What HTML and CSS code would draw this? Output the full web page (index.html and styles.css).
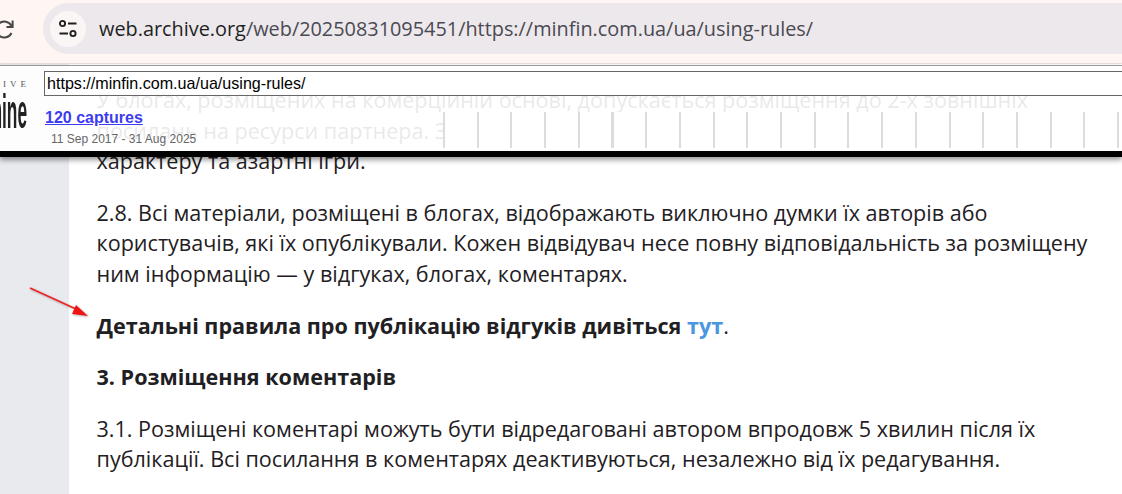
FILE: index.html
```html
<!DOCTYPE html>
<html lang="uk">
<head>
<meta charset="utf-8">
<title>Правила використання</title>
<link rel="stylesheet" href="styles.css">
</head>
<body>
<header class="chrome">
  <svg class="reload" width="14" height="24" viewBox="0 0 14 24" aria-hidden="true">
    <path d="M11.5 8A8 8 0 1 0 11.5 15" fill="none" stroke="#474747" stroke-width="2"/>
    <path d="M12.6 2.5V9H6.5" fill="none" stroke="#474747" stroke-width="2"/>
  </svg>
  <div class="omnibox">
    <span class="site-btn">
      <svg width="20" height="20" viewBox="0 0 20 20" aria-hidden="true">
        <circle cx="4.5" cy="4.5" r="2.6" fill="none" stroke="#1f1f1f" stroke-width="1.9"/>
        <path d="M10 4.5H18.5M1.5 14.5H10" stroke="#1f1f1f" stroke-width="1.9" fill="none"/>
        <circle cx="15" cy="14.5" r="2.6" fill="none" stroke="#1f1f1f" stroke-width="1.9"/>
      </svg>
    </span>
    <span class="url"><b class="host">web.archive.org</b>/web/20250831095451/https://minfin.com.ua/ua/using-rules/</span>
  </div>
</header>
<div class="page">
  <aside class="gutter"></aside>
  <main class="article">
    <p>У блогах, розміщених на комерційній основі, допускається розміщення до 2-х зовнішніх посилань на ресурси партнера. З<br>характеру та азартні ігри.</p>
    <p>2.8. Всі матеріали, розміщені в блогах, відображають виключно думки їх авторів або користувачів, які їх опублікували. Кожен відвідувач несе повну відповідальність за розміщену ним інформацію — у відгуках, блогах, коментарях.</p>
    <p class="strong">Детальні правила про публікацію відгуків дивіться <a href="#">тут</a><span class="normal">.</span></p>
    <h3>3. Розміщення коментарів</h3>
    <p>3.1. Розміщені коментарі можуть бути відредаговані автором впродовж 5 хвилин після їх публікації. Всі посилання в коментарях деактивуються, незалежно від їх редагування.</p>
  </main>
</div>
<section class="wayback">
  <div class="logo"><span class="logo-top">IVE</span><span class="logo-main">mine</span></div>
  <div class="wb-info">
    <div class="wb-url">https://minfin.com.ua/ua/using-rules/</div>
    <a class="captures" href="#">120 captures</a>
    <div class="dates">11 Sep 2017 - 31 Aug 2025</div>
  </div>
  <div class="sparkline"></div>
</section>
<svg class="arrow" width="70" height="40" viewBox="0 0 70 40" aria-hidden="true">
  <path d="M1 2 L47 23" stroke="#f02020" stroke-width="1.6" fill="none"/>
  <path d="M59 30 L43 28 L47 19 Z" fill="#f01515"/>
</svg>
```
FILE: styles.css
```css
* { box-sizing: border-box; }
html, body { margin: 0; height: 494px; overflow: hidden; background: #fff; }
body { font-family: "Open Sans", sans-serif; color: #1f2023; }
.chrome {
  height: 64px;
  background: #fff6f3;
  border-bottom: 1px solid #e8e2df;
  display: flex;
  align-items: flex-start;
  padding: 18px 0 0 0;
  overflow: hidden;
}
.reload { flex: none; }
.omnibox {
  margin: -15px 0 0 29px;
  flex: 1;
  height: 51px;
  background: #ede8ec;
  border-radius: 26px 0 0 26px;
  display: flex;
  align-items: center;
  padding-left: 7px;
  min-width: 0;
}
.site-btn {
  width: 36px;
  height: 36px;
  border-radius: 50%;
  background: #fbf6f6;
  display: flex;
  align-items: center;
  justify-content: center;
  flex: none;
}
.url { margin-left: 13px; font-size: 19.86px; color: #4a4a52; white-space: nowrap; }
.host { font-weight: 400; color: #1f1f1f; }
.page { display: flex; height: 430px; }
.gutter { width: 69px; background: #e9eaee; flex: none; }
.article { flex: 1; padding: 21px 26px 0 27.5px; font-size: 21.58px; line-height: 30.6px; overflow: hidden; }
.article p { margin: 0 0 21px; }
.strong { font-weight: 700; }
.strong a { color: #4a96e0; text-decoration: none; }
.normal { font-weight: 400; }
.article h3 { font-size: 21.58px; line-height: 30.6px; font-weight: 700; margin: 0 0 21px; }
.wayback {
  position: absolute;
  left: 0; right: 0; top: 65px;
  height: 92px;
  background: rgba(255,255,255,.9);
  border-top: 1px solid #999;
  border-bottom: 6px solid #000;
  box-shadow: 0 3px 5px rgba(0,0,0,.4);
  font-family: "Liberation Sans", sans-serif;
  display: flex;
  overflow: hidden;
}
.logo { width: 44px; flex: none; display: flex; flex-direction: column; overflow: hidden; }
.logo-top { margin-top: 13px; font: 9px "Liberation Serif", serif; letter-spacing: 4px; color: #555; text-align: right; white-space: nowrap; padding-right: 14px; }
.logo-main { display: block; font: 700 48px/40px "Liberation Sans", sans-serif; color: #222; width: 27px; transform: scaleX(.36); transform-origin: right; margin-top: 3px; white-space: nowrap; direction: rtl; }
.wb-info { flex: none; width: 399px; }
.wb-url {
  position: absolute;
  left: 44px; right: -2px; top: 5px;
  height: 25px;
  border: 1px solid #666;
  background: #fff;
  font-size: 16.1px;
  line-height: 23px;
  padding-left: 2px;
  color: #000;
}
.captures { display: block; margin: 43px 0 0 1px; font-size: 16px; font-weight: 700; color: #3c3cf0; white-space: nowrap; }
.dates { margin: 5px 0 0 7px; font-size: 12px; color: #666; white-space: nowrap; }
.sparkline {
  flex: 1;
  margin-top: 46px;
  height: 36px;
  background: #fff repeating-linear-gradient(90deg, #dcdcdc 0 2px, transparent 2px 33.7px);
}
.arrow { position: absolute; left: 29px; top: 286px; filter: drop-shadow(1px 1px 1px rgba(0,0,0,.3)); }
```
